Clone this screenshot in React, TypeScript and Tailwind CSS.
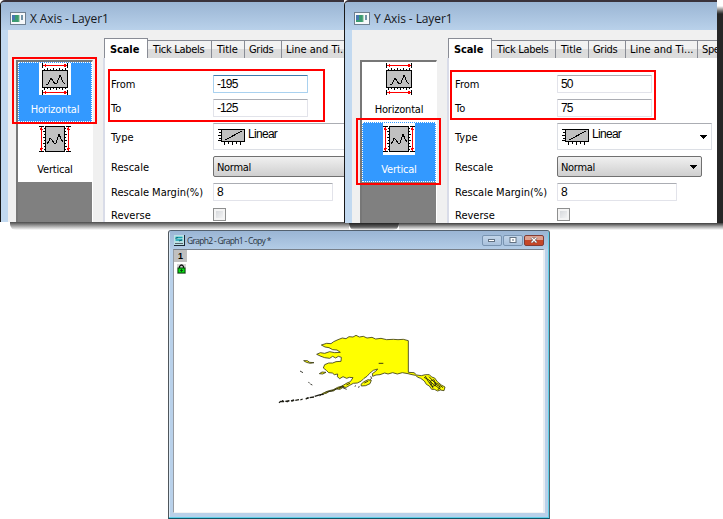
import React from "react";

const TAHOMA = "font-['DejaVu_Sans_Condensed','DejaVu_Sans',sans-serif]";

function HorizontalIcon() {
  return (
    <svg width="32" height="32" viewBox="0 0 32 32" shapeRendering="crispEdges" className="bg-white">
      <rect x="3.5" y="7.5" width="25" height="17" fill="#c0c0c0" stroke="#000" />
      <path d="M5 6.5H28M5 25.5H28" stroke="#000" strokeDasharray="1 2" />
      <path d="M8.5 5V7M14.5 5V7M20.5 5V7M26.5 5V7M5.5 25V27M11.5 25V27M17.5 25V27M23.5 25V27" stroke="#000" />
      <path d="M3.5 0V5M28.5 0V5M3.5 27V32M28.5 27V32" stroke="#000" />
      <path d="M4 2.5H28M4 29.5H28" stroke="#f00" />
      <path d="M4 2.5L7 0.5V4.5ZM28 2.5L25 0.5V4.5ZM4 29.5L7 27.5V31.5ZM28 29.5L25 27.5V31.5Z" fill="#f00" />
      <path d="M7.5 22L9 21L12 15L14 18L16 21L18 20L21 12L24 19L26 21" fill="none" stroke="#000" />
    </svg>
  );
}

function VerticalIcon() {
  return (
    <svg width="32" height="32" viewBox="0 0 32 32" shapeRendering="crispEdges" className="bg-white">
      <rect x="6.5" y="3.5" width="19" height="25" fill="#c0c0c0" stroke="#000" />
      <path d="M5.5 5V28M26.5 5V28" stroke="#000" strokeDasharray="1 2" />
      <path d="M4 8.5H6M4 14.5H6M4 20.5H6M26 11.5H28M26 17.5H28M26 23.5H28" stroke="#000" />
      <path d="M0 3.5H5M0 28.5H5M27 3.5H32M27 28.5H32" stroke="#000" />
      <path d="M2.5 4V28M29.5 4V28" stroke="#f00" />
      <path d="M2.5 4L0.5 7H4.5ZM29.5 4L27.5 7H31.5ZM2.5 28L0.5 25H4.5ZM29.5 28L27.5 25H31.5Z" fill="#f00" />
      <path d="M8 21L9.5 19L11 15L13 17L15 20L17 20L18 17L20 11L22 16L24 19" fill="none" stroke="#000" />
    </svg>
  );
}

function LinearIcon() {
  return (
    <svg width="27" height="17" viewBox="0 0 27 17" shapeRendering="crispEdges" className="shrink-0">
      <rect x="3.5" y="1.5" width="23" height="12" fill="#c0c0c0" stroke="#000" />
      <path d="M0 1.5H3M1 4.5H3M0 7.5H3M1 10.5H3M0 12.5H3M6.5 14V17M10.5 14V16M14.5 14V17M18.5 14V16M22.5 14V17" stroke="#000" />
      <path d="M7 12L24 3" stroke="#000" />
    </svg>
  );
}

function DialogIcon() {
  return (
    <svg width="16" height="13" viewBox="0 0 16 13">
      <rect x=".5" y=".5" width="15" height="12" fill="#f6f8fa" stroke="#6f8090" />
      <rect x="2" y="3" width="7" height="7" fill="#3b9b72" />
      <rect x="2" y="3" width="3" height="5" fill="#4778b0" />
      <path d="M9 3V10" stroke="#73b488" />
      <path d="M12 3V8" stroke="#44718b" strokeWidth="1.5" />
    </svg>
  );
}

function Arrow() {
  return (
    <svg width="7" height="4" viewBox="0 0 7 4" shapeRendering="crispEdges">
      <path d="M0 0H7L3.5 4Z" fill="#000" />
    </svg>
  );
}

function ListItem({ label, selected, children }: { label: string; selected: boolean; children: React.ReactNode }) {
  return (
    <div
      className={
        "flex h-[60px] flex-col items-center border border-dotted text-[11px] leading-[14px] tracking-[-0.2px] " +
        (selected ? "border-white bg-[#3399ff] text-white" : "border-transparent bg-white text-black")
      }
    >
      {children}
      <span className="mt-[8px] whitespace-nowrap">{label}</span>
    </div>
  );
}

function Tab({ width, children }: { width: string; children: React.ReactNode }) {
  return (
    <div
      className={
        "h-[18px] shrink-0 overflow-hidden whitespace-nowrap border-r border-t border-[#898c95] bg-gradient-to-b from-[#f2f2f2] from-50% to-[#dcdcdc] to-50% pl-[4px] text-[11px] leading-[17px] " +
        width
      }
    >
      {children}
    </div>
  );
}

function Row({ label, height, children }: { label: string; height: string; children: React.ReactNode }) {
  return (
    <div className={"flex shrink-0 items-center " + height}>
      <span className="-mb-px mt-px w-[102px] shrink-0 whitespace-nowrap text-[11px] leading-[14px]">{label}</span>
      {children}
    </div>
  );
}

const FIELD =
  "box-border h-[18px] shrink-0 rounded-[1px] border border-[#e2e3ea] border-t-[#abadb3] bg-white pl-[3px] font-['Liberation_Sans',Arial,sans-serif] text-[12px] leading-[16px] tracking-[-0.9px] ";

interface AxisProps {
  title: string;
  from: string;
  to: string;
  selected: "h" | "v";
  size: string;
  focus?: boolean;
  extraTab?: boolean;
  boxes: [string, string];
}

function AxisWindow({ title, from, to, selected, size, focus, extraTab, boxes }: AxisProps) {
  return (
    <section className={"relative flex shrink-0 flex-col overflow-hidden rounded-tl-[5px] border-l border-t-2 border-l-[#191919] border-t-[#39323b] bg-[#b9d1ea] text-black " + TAHOMA + " " + size}>
      <header className="flex h-[28px] shrink-0 items-center bg-gradient-to-b from-[#9ab5d4] to-[#b9d1ea] pl-[9px] pt-[4px]">
        <DialogIcon />
        <h1 className="ml-[4px] mt-px font-['Open_Sans','Noto_Sans',sans-serif] text-[12px] leading-[16px] tracking-[-0.1px] text-[#16181c]">{title}</h1>
      </header>
      <div className="flex min-h-0 flex-1 border-l-[7px] border-[#c2d9f0] bg-[#f0f0f0]">
        <aside className="ml-[8px] mt-[30px] w-[77px] shrink-0 border-l-2 border-r border-t-2 border-l-[#777] border-r-white border-t-[#777] bg-[#808080]">
          <ListItem label="Horizontal" selected={selected === "h"}>
            <HorizontalIcon />
          </ListItem>
          <ListItem label="Vertical" selected={selected === "v"}>
            <VerticalIcon />
          </ListItem>
        </aside>
        <div className="ml-[10px] mt-[8px] flex min-w-0 flex-1 flex-col">
          <nav className="flex h-[20px] shrink-0 items-end overflow-hidden">
            <div className="ml-px h-[20px] w-[44px] shrink-0 border border-b-0 border-[#898c95] bg-white pl-[5px] pt-[3px] text-[11px] font-bold leading-[15px] tracking-[-0.1px]">
              Scale
            </div>
            <Tab width="w-[64px] tracking-[-0.3px] pl-[5px]">Tick Labels</Tab>
            <Tab width="w-[33px] tracking-[-0.1px] pl-[5px]">Title</Tab>
            <Tab width="w-[37px] tracking-[-0.3px]">Grids</Tab>
            <Tab width="w-[72px]">Line and Ti...</Tab>
            {extraTab && <Tab width="w-[40px] tracking-[-0.4px]">Spe</Tab>}
          </nav>
          <div className="flex min-h-0 flex-1 flex-col gap-[6px] overflow-hidden border-l-2 border-[#d9dce8] bg-white pl-[6px] pt-[17px]">
            <Row label="From" height="h-[18px]">
              <div className={FIELD + "w-[95px] " + (focus ? "!border-[#a9d1ef] !border-t-[#3d7bad]" : "")}>{from}</div>
            </Row>
            <Row label="To" height="h-[18px]">
              <div className={FIELD + "w-[95px]"}>{to}</div>
            </Row>
            <Row label="Type" height="h-[27px]">
              <div className="flex h-[27px] w-[155px] shrink-0 items-center border border-[#dcdfe5] border-t-[#abadb3] pl-[4px] pr-[4px]">
                <LinearIcon />
                <span className="-mt-[6px] ml-[3px] flex-1 font-['Liberation_Sans',Arial,sans-serif] text-[12px] leading-[14px] tracking-[-0.7px]">Linear</span>
                <Arrow />
              </div>
            </Row>
            <Row label="Rescale" height="h-[21px]">
              <div className="flex h-[21px] w-[145px] shrink-0 items-center justify-between rounded-[2px] border border-[#707070] bg-gradient-to-b from-[#f0f0f0] to-[#cfcfcf] pl-[3px] pr-[4px] text-[11px] leading-[14px] tracking-[-0.3px]">
                <span className="-mb-px mt-px">Normal</span>
                <Arrow />
              </div>
            </Row>
            <Row label="Rescale Margin(%)" height="h-[18px]">
              <div className={FIELD + "w-[120px]"}>8</div>
            </Row>
            <Row label="Reverse" height="mt-px h-[13px]">
              <div className="h-[13px] w-[13px] border border-[#8e8f8f] bg-gradient-to-br from-[#cfd2d6] to-[#fafafa] shadow-[inset_0_0_0_2px_#f4f4f4]" />
            </Row>
          </div>
        </div>
      </div>
      <div className={"absolute border-2 border-[#ff0000] " + boxes[0]} />
      <div className={"absolute border-2 border-[#ff0000] " + boxes[1]} />
    </section>
  );
}

function AlaskaMap() {
  return (
    <svg width="190" height="90" viewBox="0 0 570 270" className="ml-[96px] mt-[75px]">
      <g fill="#ff0" stroke="#3a3a14" strokeWidth="2.5" strokeLinejoin="round">
        <path d="M204 44L217 39L228 41L237 35L249 36L258 31L268 36L280 34L291 39L306 37L317 42L333 40L350 44L370 43L384 44L400 43L415 47L415 142L432 143L440 150L454 152L466 149L478 149L485 156L494 159L502 170L514 180L525 186L522 197L511 195L503 198L493 193L485 193L478 183L469 178L463 168L452 160L444 157L436 151L426 149L414 146L397 143L382 147L368 143L354 147L344 144L330 149L318 150L308 154L307 146L317 139L323 132L310 136L299 145L291 154L282 160L274 168L262 174L250 175L239 181L229 187L219 187L210 193L199 192L190 198L178 199L169 205L157 207L149 212L158 205L174 198L190 194L203 187L216 183L231 174L241 170L249 158L238 157L230 160L219 155L209 161L202 155L203 147L193 149L187 144L176 143L169 136L160 129L164 119L176 114L188 114L198 110L213 109L214 97L205 94L197 99L188 94L179 100L164 98L153 94L140 88L151 83L164 85L179 80L194 83L211 82L201 75L188 74L177 68L165 66L154 60L170 55L183 56L191 50Z" />
        <path d="M273 178L282 170L294 164L304 166L300 176L287 182L274 183Z" />
        <path d="M148 146L156 141L168 142L158 147Z" />
        <path d="M101 107L112 107L119 112L132 113L121 115L109 112Z" />
      </g>
      <g fill="none" stroke="#1b1b12" strokeWidth="2.5">
        <path d="M462 157L477 165L489 177L499 184L512 193M466 153L475 170L483 174L489 190M477 155L492 171L506 178L519 188M480 169L492 164L498 180L486 185L477 172M493 175L511 186L503 195" />
        <path d="M326 115H340M90 138L99 143M115 172L119 174M121 177L127 180M254 184L258 182M264 187L269 185" />
        <path d="M134 214L151 209L161 208M107 222L116 218M119 218L132 216" strokeWidth="4" />
        <path d="M27 233L32 229L42 230L36 227M46 229L58 227L50 231M63 228L72 225L67 229M76 226L87 224M91 225L98 222M108 221L115 219" strokeWidth="4" />
        <path d="M166 202L184 198L199 192L210 187L223 184M208 191L219 182M218 188L230 193M229 180L240 175M283 174L295 168M302 154L305 160L299 165" />
      </g>
    </svg>
  );
}

function GraphWindow() {
  return (
    <section className="ml-[168px] flex h-[289px] w-[382px] flex-col rounded-t-[3px] border border-b-[#125668] border-l-[#4f565c] border-r-[#51636b] border-t-[#53616f] bg-[#b9d1ea] shadow-[inset_-1px_-1px_0_#61d0e9,inset_1px_0_0_#dceaf7]">
      <header className="mx-px flex h-[18px] shrink-0 items-center bg-gradient-to-b from-[#9ab5d4] to-[#b3cce6] pl-[4px] pr-[4px]">
        <svg width="11" height="11" viewBox="0 0 11 11">
          <rect width="11" height="11" fill="#1d2836" />
          <rect width="10" height="10" fill="#bae1e5" />
          <path d="M1.5 2.5H8.5M1.5 5H8.5" fill="none" stroke="#12a3b0" strokeWidth="1.5" />
          <path d="M1.5 3.5L4 2.5M5 6L8 5" stroke="#0b6470" />
          <path d="M1 8.5H9" stroke="#58636b" />
        </svg>
        <h2 className="ml-[2px] mt-px flex-1 whitespace-nowrap font-['Open_Sans','Noto_Sans',sans-serif] text-[8.5px] leading-[12px] tracking-[-0.7px] text-[#28323d]">Graph2 - Graph1 - Copy *</h2>
        <div className="flex gap-[1px]">
          <div className="flex h-[11px] w-[20px] items-center justify-center rounded-[2px] border border-[#7994b1] bg-gradient-to-b from-[#c2d5e9] to-[#a9c1dc]">
            <svg width="8" height="6"><rect x=".5" y="2.5" width="6" height="2" fill="#fff" stroke="#637282" /></svg>
          </div>
          <div className="flex h-[11px] w-[20px] items-center justify-center rounded-[2px] border border-[#7994b1] bg-gradient-to-b from-[#c2d5e9] to-[#a9c1dc]">
            <svg width="8" height="6"><rect x="1" y=".5" width="6" height="5" fill="#fff" stroke="#637282" /><path d="M3 3H5" stroke="#526477" /></svg>
          </div>
          <div className="flex h-[11px] w-[20px] items-center justify-center rounded-[2px] border border-[#813c35] bg-gradient-to-b from-[#dda08f] from-45% to-[#c54728] to-50%">
            <svg width="8" height="6"><path d="M1.5 .5L6.5 5.5M6.5 .5L1.5 5.5" stroke="#624b4c" strokeWidth="2.5" /><path d="M1.5 .5L6.5 5.5M6.5 .5L1.5 5.5" stroke="#fff" strokeWidth="1.3" /></svg>
          </div>
        </div>
      </header>
      <div className="mb-[5px] ml-[4px] mr-[4px] flex min-h-0 flex-1 border border-b-[#f3f3f3] border-l-[#969ba2] border-r-2 border-r-[#e8edf2] border-t-[#777f89] bg-white">
        <div className="flex w-[13px] shrink-0 flex-col items-center">
          <div className="h-[12px] w-[13px] bg-[#c0c0c0] text-center font-['Liberation_Sans',Arial,sans-serif] text-[9px] font-bold leading-[13px]">1</div>
          <svg width="9" height="10" viewBox="0 0 9 10" className="ml-[2px] mt-[2px]">
            <rect width="9" height="10" fill="#d5d5d5" />
            <path d="M2.5 5V2.5Q4.5 -.5 6.5 2.5V5" fill="none" stroke="#111" strokeWidth="1.3" />
            <rect x="1" y="4" width="7" height="5" fill="#08df14" stroke="#063c08" />
            <path d="M4.5 5V8M3 6.5H6" stroke="#063c08" strokeWidth=".8" />
          </svg>
        </div>
        <div className="-ml-[13px] min-w-0 flex-1">
          <AlaskaMap />
        </div>
      </div>
    </section>
  );
}

export default function App() {
  return (
    <main className="flex h-[519px] w-[723px] flex-col overflow-hidden bg-white">
      <div className="flex h-[223px] shrink-0 bg-white">
        <AxisWindow
          title="X Axis - Layer1"
          from="-195"
          to="-125"
          selected="h"
          focus
          size="h-[222px] w-[344px]"
          boxes={["left-[11px] top-[55px] h-[67px] w-[85px]", "left-[107px] top-[67px] h-[53px] w-[217px]"]}
        />
        <AxisWindow
          title="Y Axis - Layer1"
          from="50"
          to="75"
          selected="v"
          extraTab
          size="h-[223px] w-[373px]"
          boxes={["left-[11px] top-[116px] h-[67px] w-[85px]", "left-[105px] top-[68px] h-[50px] w-[206px]"]}
        />
        <div className="mt-[6px] flex-1 bg-gradient-to-b from-white to-[#262626] to-[8px]" />
      </div>
      <div className="flex h-[7px] shrink-0">
        <div className="-mt-px ml-[10px] h-[8px] w-[339px] rounded-bl-[6px] bg-gradient-to-b from-[#4c4c4c] via-[#a5a5a5] via-50% to-white" />
        <div className="h-[7px] w-[50px] rounded-b-[6px] bg-gradient-to-b from-[#222] via-[#666] via-60% to-white" />
        <div className="h-[7px] flex-1 bg-gradient-to-b from-[#3e3e3e] via-[#a5a5a5] via-50% to-white" />
      </div>
      <GraphWindow />
    </main>
  );
}
